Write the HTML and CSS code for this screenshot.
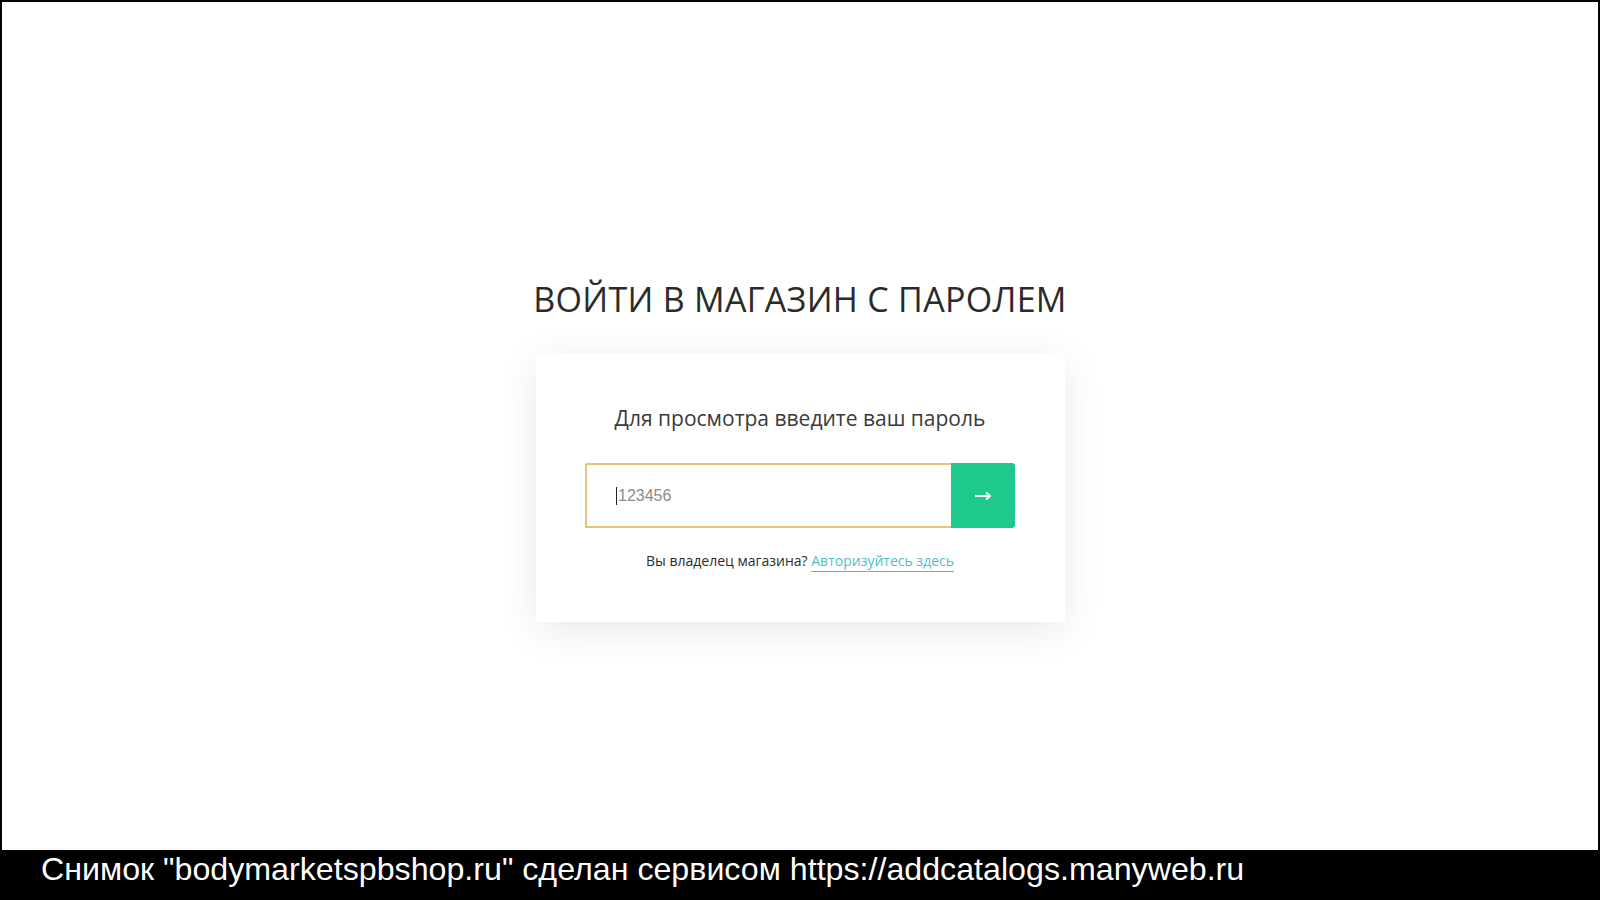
FILE: index.html
```html
<!DOCTYPE html>
<html lang="ru">
<head>
<meta charset="utf-8">
<title>Вход в магазин</title>
<link rel="stylesheet" href="styles.css">
</head>
<body>
<div class="page">
  <main class="main">
    <h1 class="title">ВОЙТИ В МАГАЗИН С ПАРОЛЕМ</h1>
    <section class="card">
      <p class="lead">Для просмотра введите ваш пароль</p>
      <form class="form">
        <div class="field"><span class="caret"></span><span class="placeholder">123456</span></div>
        <button class="submit" type="button" aria-label="Войти">
          <svg width="17" height="10" viewBox="0 0 17 10"><path d="M0 5H15M11 1.5L15 5L11 8.5" fill="none" stroke="#fff" stroke-width="2"/></svg>
        </button>
      </form>
      <p class="owner">Вы владелец магазина? <a class="link" href="#">Авторизуйтесь здесь</a></p>
    </section>
  </main>
  <footer class="footer">Снимок "bodymarketspbshop.ru" сделан сервисом https://addcatalogs.manyweb.ru</footer>
</div>
</body>
</html>
```
FILE: styles.css
```css
* { box-sizing: border-box; }
html, body { margin: 0; padding: 0; background: #fff; }
body { width: 1600px; height: 900px; overflow: hidden; font-family: "Open Sans", "Noto Sans", sans-serif; }
.page { display: flex; flex-direction: column; height: 900px; }
.main {
  height: 850px;
  border: 2px solid #000;
  border-bottom: none;
  display: flex;
  flex-direction: column;
  align-items: center;
  padding-top: 274px;
}
.title {
  margin: 0;
  font-weight: 400;
  font-size: 34px;
  line-height: 46px;
  color: #2b2b2b;
  letter-spacing: 0.3px;
}
.card {
  margin-top: 31px;
  width: 529px;
  height: 269px;
  background: #fff;
  border-radius: 3px;
  box-shadow: 0 8px 40px rgba(0, 0, 0, 0.09);
  display: flex;
  flex-direction: column;
  align-items: center;
  padding-top: 51px;
}
.lead {
  margin: 0;
  font-size: 21px;
  line-height: 28px;
  color: #3a3a3a;
}
.form { margin-top: 31px; display: flex; width: 430px; height: 65px; }
.field {
  flex: 1;
  display: flex;
  align-items: center;
  border: 2px solid #e5c47c;
  border-right: none;
  border-radius: 2px 0 0 2px;
  padding-left: 29px;
}
.caret { width: 1px; height: 18px; background: #222; margin-right: 1px; }
.placeholder { font-family: "Liberation Sans", Arial, sans-serif; font-size: 16px; color: #8a8a8a; }
.submit {
  width: 64px;
  border: none;
  border-radius: 0 3px 3px 0;
  background: #1ec98b;
  padding: 0;
  display: flex;
  align-items: center;
  justify-content: center;
}
.owner { margin: 23px 0 0; font-size: 14px; color: #2c2c2c; line-height: 20px; }
.link { color: #55bdca; text-decoration: none; border-bottom: 1px solid #55bdca; padding-bottom: 1px; }
.footer {
  height: 50px;
  background: #000;
  color: #fff;
  font-family: "Liberation Sans", Arial, sans-serif;
  font-size: 32.2px;
  line-height: 38px;
  padding-left: 41px;
  white-space: nowrap;
}
```
